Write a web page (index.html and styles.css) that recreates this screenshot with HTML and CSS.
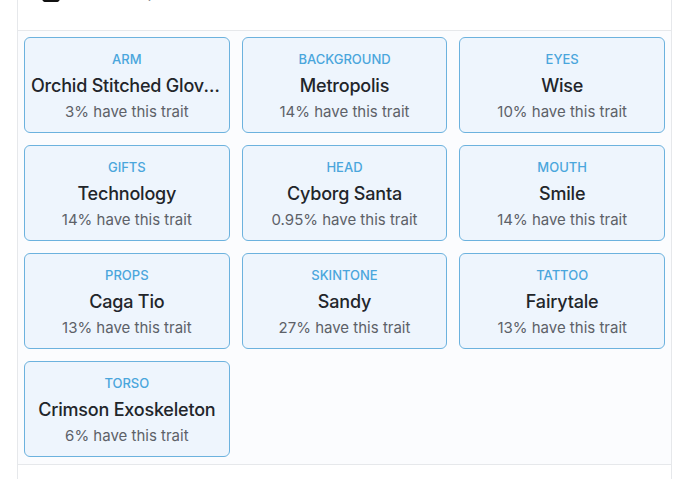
FILE: index.html
```html
<!DOCTYPE html>
<html lang="en">
<head>
    <title>Traits</title>
    <meta charset="UTF-8">
    <meta name="viewport" content="width=device-width, initial-scale=1.0">
    <link rel="stylesheet" href="styles.css">
</head>
<body>
    <section class="panel">
        <div class="panel-head">
            <svg class="head-icon" width="18" height="18" viewBox="0 0 18 18">
                <rect x="1" y="1" width="16" height="16" rx="3" fill="none" stroke="#111" stroke-width="2.4"/>
            </svg>
            <span class="head-title">Properties</span>
        </div>
        <div class="traits">
            <div class="trait">
                <div class="trait-type">Arm</div>
                <div class="trait-value">Orchid Stitched Gloves</div>
                <div class="trait-rarity">3% have this trait</div>
            </div>
            <div class="trait">
                <div class="trait-type">Background</div>
                <div class="trait-value">Metropolis</div>
                <div class="trait-rarity">14% have this trait</div>
            </div>
            <div class="trait">
                <div class="trait-type">Eyes</div>
                <div class="trait-value">Wise</div>
                <div class="trait-rarity">10% have this trait</div>
            </div>
            <div class="trait">
                <div class="trait-type">Gifts</div>
                <div class="trait-value">Technology</div>
                <div class="trait-rarity">14% have this trait</div>
            </div>
            <div class="trait">
                <div class="trait-type">Head</div>
                <div class="trait-value">Cyborg Santa</div>
                <div class="trait-rarity">0.95% have this trait</div>
            </div>
            <div class="trait">
                <div class="trait-type">Mouth</div>
                <div class="trait-value">Smile</div>
                <div class="trait-rarity">14% have this trait</div>
            </div>
            <div class="trait">
                <div class="trait-type">Props</div>
                <div class="trait-value">Caga Tio</div>
                <div class="trait-rarity">13% have this trait</div>
            </div>
            <div class="trait">
                <div class="trait-type">Skintone</div>
                <div class="trait-value">Sandy</div>
                <div class="trait-rarity">27% have this trait</div>
            </div>
            <div class="trait">
                <div class="trait-type">Tattoo</div>
                <div class="trait-value">Fairytale</div>
                <div class="trait-rarity">13% have this trait</div>
            </div>
            <div class="trait">
                <div class="trait-type">Torso</div>
                <div class="trait-value">Crimson Exoskeleton</div>
                <div class="trait-rarity">6% have this trait</div>
            </div>
        </div>
        <div class="panel-foot"></div>
    </section>
</body>
</html>
```

FILE: styles.css
```css
body {
    font-family: Inter, "Open Sans", sans-serif;
    margin: 0;
    padding: 0;
    background-color: #ffffff;
}
.panel {
    margin: -30px 0 0 17px;
    width: 655px;
    border-left: 1px solid #e6e8eb;
    border-right: 1px solid #e6e8eb;
    box-sizing: border-box;
}
.panel-head {
    display: flex;
    align-items: flex-start;
    padding: 0 24px;
    gap: 62px;
    border-bottom: 1px solid #e6e8eb;
    box-sizing: border-box;
    height: 61px;
}
.head-icon {
    margin-top: 14px;
}
.head-title {
    font-size: 16px;
    line-height: 20px;
    color: #8a8e95;
    margin-top: 12px;
}
.traits {
    display: grid;
    grid-template-columns: repeat(3, 1fr);
    gap: 12px;
    padding: 6px 6px 7px 6px;
    background-color: #fbfcfe;
}
.trait {
    border: 1px solid #6cb2de;
    border-radius: 6px;
    background-color: #eef5fd;
    padding: 11px 6px 8px;
    text-align: center;
    min-width: 0;
}
.trait-type {
    font-size: 13px;
    line-height: 20px;
    font-weight: 500;
    text-transform: uppercase;
    color: #4aa6dc;
}
.trait-value {
    margin-top: 4px;
    font-size: 18px;
    line-height: 26px;
    font-weight: 500;
    letter-spacing: -0.2px;
    color: #22252a;
    white-space: nowrap;
    overflow: hidden;
    text-overflow: ellipsis;
}
.trait-rarity {
    margin-top: 1px;
    font-size: 15px;
    line-height: 24px;
    color: #5d6168;
}
.panel-foot {
    height: 30px;
    border-top: 1px solid #e6e8eb;
}
```
